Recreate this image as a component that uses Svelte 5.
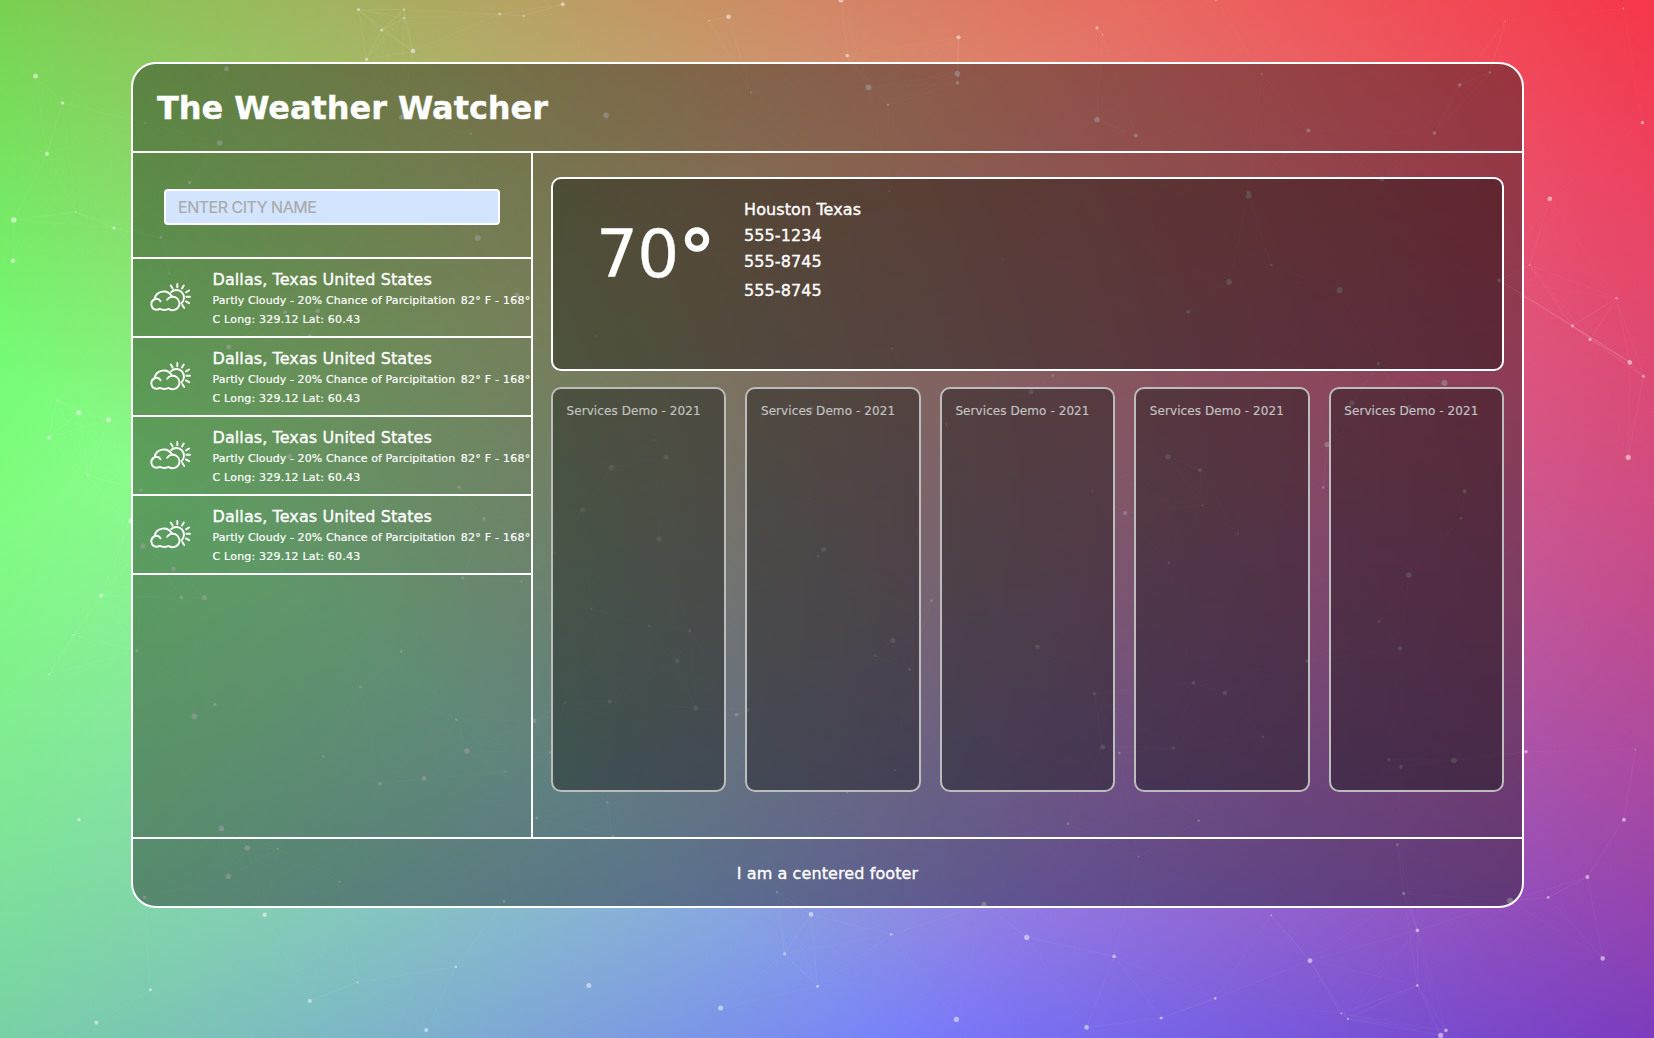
<script>
  const cities = [1, 2, 3, 4];
  const services = [1, 2, 3, 4, 5];

  // Particle field: x, y, radius
  const dots = `35.5,76,2.5 62.5,103,1.7 47,153.7,2 13.8,220,2.8 114,228,1.6 13,260.7,2.3 57,400,1 79,412.5,2.5 108.5,419.8,2.5 48.7,437.5,2 88,475.6,1 358.5,9.5,1.5 404,9.5,1 404,18,1 381.7,30,1.5 499.8,14,1.3 523.7,16,1 562.8,4.3,2 728.5,16.7,2.3 413,51,2.3 366.5,59.4,1.5 226.6,68.8,2.5 145.5,123,1 219.8,143,2.8 401.4,117.3,2.5 471,134,1 606,115.4,2.8 751,92.6,1 189.6,182.4,1.6 161,237.6,1.3 477.6,238,3 169.5,273.6,.8 517,295,2.5 318,311,2.3 285,312,2 271,319,2 310,335.5,1.5 228.8,347,2.5 289.7,456.6,2.5 459,487,1.8 141,490,1.5 484,518.8,1.8 75.7,212,.7 654,440,.8 666,457,2.5 611.5,467.4,2.8 582.5,510,2.3 811,409,2.8 595.5,336,.8 709,20.6,.7
  841,0,2.5 847.3,55.6,1.8 958.5,37.3,2 1097,28,1.4 1102.5,34.7,.7 1216,0,.9 1505.3,21,.6 1623.4,8.4,.8 868.5,87.4,3 957.4,73.8,2.8 957.4,83,1.8 888,105,1.3 1097,119.7,2.8 1135.8,135.4,2 1308.4,130.6,2 1261.8,73.8,.9 1459.8,85,1.8 1490,72.4,1.2 1434.4,133,1.8 1642.4,122.7,1.6 1549.8,198.7,2.3 1382,179,2.5 1248.6,195.7,2.8 1248.6,192.3,1.8 1229,282,2.8 1271.3,265,1.2 1339.6,290.3,3 1188.2,311.7,2 1499,280.4,2 1378.3,363.7,1.6 1529.7,265,.7 1616.5,298,1.1 1572.6,326,1.4 1590,339.4,1.6 1629.8,362.4,2.3 1643.5,376.4,1.4 1628.2,457.4,2.6 1444.5,383,3 1351.8,403,2.6 1409,406.8,2 1327,444.6,2.6 1323.2,487.4,1.2 1168,456.6,2.6 1200,470,2 1464.6,491.4,2 1461,518.4,1.2 1125.2,513,2 1092.4,490.4,.7 1202.5,505.4,.7 1031,391.7,2.5 1052.7,375.6,1.3 946.3,424,1.2 889.6,191,1 891.8,348.4,1.1 1003,259.4,.6
  130.7,520.7,2.5 143,546,2.6 173.7,568.7,2 101,595.7,2 181.6,597.4,2 204.4,597.7,2.5 73.6,635,1 49.2,674.4,.8 137,650.7,1.6 401.3,651.4,1.5 462.7,578,1.5 521.5,581.7,1 360.6,687,1.3 215,704.7,1.6 194.3,716.4,2.8 456.4,719.4,1.2 533.7,720.7,2.5 467,751,2.8 323.5,756.4,1.2 424,778.4,2.3 380,783.7,1.9 505.6,771.7,1 221.3,828.4,2.8 79,819.7,1.7 247.3,848,2.8 278,848.7,1 228.2,876.4,2.6 339.4,881.4,1 144.6,897.4,1.6 264.7,914.7,2.2 150.4,989.7,1.5 96.4,1022.4,2 309.8,1001,2 357.4,982.4,.9 455.9,966.7,1.3 426.2,1030,2 504,901.4,1.3 588.8,985.4,2.5 720.6,1008,2.5 811,914.4,2.3 784.6,953.7,1.5 817.5,986.4,1.3 659,539,2.6 554.9,553.4,1.2 591.4,609,1 649.6,625.7,1.3 689.9,630.7,1.6 677.1,660.7,2.3 609.9,701.4,2 564.9,702.4,1 695.7,708,2.6 736.5,714.7,1.9 748,710,2 550.6,752.7,1.4 607.3,802.4,1.2 536.9,818,1.6 613,836,1.3 823.8,549.4,2.5 818,556.4,1.3 777.2,892,1.3
  931.5,600.7,1.3 892.8,640.4,2.5 875.4,655.7,1.3 909.8,669.4,1.6 1037.4,646.7,2.2 1094.5,693.7,1.8 1102.5,747,2.5 895,770,1 847,792.4,1 983.9,904.4,2.6 891.2,934.4,1.2 1026.8,937.4,2.6 1114.1,956.4,1.9 956.4,1019.4,2.6 1086.6,1027.4,2.3 1161.2,1018,1.6 1215.2,998.4,1.3 1310,960.7,2.4 1417.4,930.4,1.8 1417.4,985.4,1.3 1341.2,1013.4,.8 1348,1019,1.1 1446,1030.4,1.8 1440.7,1035.4,2.6 1602.7,958.4,2.3 1587.4,877,2 1548.2,897.4,1.3 1623.9,819.7,2 1510,900.7,3 1403.7,893.4,1.6 1397.3,844.7,1.3 1068,823.7,1.3 1198.8,820.7,1.2 1138.5,856.7,.8 1271.3,915.4,.8 1526,751.7,1.7 1635.5,749.7,.6 1454,760.4,2.6 1401,766.7,1.8 1388.9,759.4,1.5 1173.4,748,1.5 1262.9,737,1.2 1224.8,692.7,2.2 1193.5,683,1.9 1169,562.7,1.2 1238,534,1 1409,575,2.8 1379.3,621.4,1.2 1400,648.4,2.2 1307.4,661,2 1119.4,753,1.3`
    .trim().split(/\s+/).map((d) => d.split(',').map(Number));

  // Nearby particles are joined; the line fades with distance
  const reach = 150;
  const links = [];
  for (let i = 0; i < dots.length; i++) {
    for (let j = i + 1; j < dots.length; j++) {
      const d = Math.hypot(dots[i][0] - dots[j][0], dots[i][1] - dots[j][1]);
      if (d < reach) links.push([dots[i], dots[j], 0.09 * (1 - d / reach)]);
    }
  }
</script>

<div class="page">
  <svg class="particles" viewBox="0 0 1654 1038" aria-hidden="true">
    {#each links as [a, b, o]}
      <line x1={a[0]} y1={a[1]} x2={b[0]} y2={b[1]} stroke="#fff" stroke-opacity={o} />
    {/each}
    <line x1="1499" y1="280" x2="1630" y2="362" stroke="#fff" stroke-opacity=".14" />
    {#each dots as [x, y, r]}
      <circle cx={x} cy={y} {r} fill="#fff" fill-opacity=".5" />
    {/each}
  </svg>

  <div class="panel">
    <header><h1>The Weather Watcher</h1></header>
    <div class="body">
      <aside>
        <div class="search"><input type="text" placeholder="ENTER CITY NAME" /></div>
        {#each cities as city (city)}
          <div class="city">
            <svg class="icon" viewBox="0 0 42 29" aria-hidden="true">
              <path d="M11.500 18.200C10.200 15.900 7.600 15.400 5.300 16.300A5.600 5.600 0 0 0 7.400 26.800Q9.400 26.800 10.800 25.900Q15.200 28 19.800 25.900A6.700 6.700 0 1 0 18.200 16.800M5.500 16.100A9.300 9.300 0 0 1 22.900 13.500" />
              <path d="M22.200 9A7.400 7.400 0 1 1 32.500 20.200M28.300 1v3.200M21.800 2.500l1.800 3M34.800 2.500l-1.800 3M40.100 7.500l-3 1.800M41 13.700h-3.600M40.100 20.200l-3.200-1.800M35.200 25l-1.900-3" />
            </svg>
            <div class="info">
              <div class="name">Dallas, Texas United States</div>
              <div class="detail"><span>Partly Cloudy - 20% Chance of Parcipitation</span><span class="temp">82° F - 168°</span></div>
              <div class="detail position">C Long: 329.12 Lat: 60.43</div>
            </div>
          </div>
        {/each}
      </aside>
      <main>
        <section class="current">
          <div class="degrees">70<span class="ring">°</span></div>
          <div class="facts">
            <div>Houston Texas</div>
            <div>555-1234</div>
            <div>555-8745</div>
            <div class="last">555-8745</div>
          </div>
        </section>
        <div class="services">
          {#each services as s (s)}
            <div class="service">Services Demo - 2021</div>
          {/each}
        </div>
      </main>
    </div>
    <footer>I am a centered footer</footer>
  </div>
</div>

<style>
  :global(body) { margin: 0; overflow: hidden; }
  .page {
    box-sizing: border-box;
    position: relative;
    height: 1038px;
    padding: 62px 130px 130px 131px;
    color: #fff;
    font: 16px/20px Verdana, "DejaVu Sans", sans-serif;
    -webkit-text-stroke: .35px currentColor;
    background:
      linear-gradient(rgba(215, 205, 225, .06), rgba(215, 205, 225, .06)),
      linear-gradient(217deg, rgba(255, 0, 18, .8), rgba(255, 0, 18, 0) 70.71%),
      linear-gradient(127deg, rgba(18, 255, 18, .72), rgba(18, 255, 18, 0) 70.71%),
      linear-gradient(336deg, rgba(0, 10, 255, .75), rgba(0, 10, 255, 0) 70.71%),
      #fff;
  }
  .page * { box-sizing: border-box; }
  .particles { position: absolute; inset: 0; width: 1654px; height: 1038px; }
  .panel {
    position: relative;
    display: flex;
    flex-direction: column;
    height: 846px;
    border: 2px solid #fff;
    border-radius: 25px;
    overflow: hidden;
    background: rgba(22, 22, 22, .4);
  }
  header { flex: none; height: 89px; padding: 24px; border-bottom: 2px solid #fff; }
  h1 { margin: 0; font-size: 32px; line-height: 41px; font-weight: 700; letter-spacing: -.05px; }
  .body { flex: 1; display: flex; min-height: 0; }
  aside { flex: none; width: 400px; border-right: 2px solid #fff; }
  .search { height: 106px; padding: 36px 31px 0; border-bottom: 2px solid #fff; }
  input {
    display: block;
    width: 336px;
    height: 36px;
    padding: 0 12px;
    border: 2px solid #fff;
    border-radius: 4px;
    background: #d2e4ff;
    font: 16px Inter, sans-serif;
    letter-spacing: -.48px;
    -webkit-text-stroke: .15px currentColor;
  }
  input::placeholder { color: #a9a9a9; opacity: 1; }
  .city { display: flex; height: 79px; border-bottom: 2px solid #fff; overflow: hidden; white-space: nowrap; }
  .icon {
    flex: none;
    width: 42px;
    height: 29px;
    margin: 24px 21.5px 0 16px;
    fill: none;
    stroke: #fff;
    stroke-width: 1.9;
    stroke-linecap: round;
    stroke-linejoin: round;
  }
  .info { padding-top: 10.5px; }
  .name { letter-spacing: .09px; }
  .detail { font-size: 11px; line-height: 19px; letter-spacing: .09px; -webkit-text-stroke: .18px currentColor; }
  .detail:not(.position) { padding-top: 1px; }
  .position { letter-spacing: .2px; }
  .temp { margin-left: 5.5px; letter-spacing: .25px; }
  main { flex: 1; padding: 24px 18px 0; }
  .current {
    display: flex;
    height: 194px;
    padding-left: 43px;
    border: 2px solid #fff;
    border-radius: 10px;
    background: rgba(8, 8, 8, .37);
  }
  .degrees { width: 148px; padding-top: 36px; font-size: 66px; line-height: 80px; letter-spacing: -.7px; -webkit-text-stroke: .3px #fff; }
  .ring { font-size: 74px; line-height: 0; vertical-align: -6px; -webkit-text-stroke: 1.4px #fff; }
  .facts { padding-top: 18px; line-height: 26px; letter-spacing: .1px; }
  .last { margin-top: 3px; }
  .services { display: grid; grid-template-columns: repeat(5, 1fr); gap: 19.2px; margin-top: 16px; }
  .service {
    height: 405px;
    padding: 12px 13.5px;
    border: 2px solid #bcbcbc;
    border-radius: 10px;
    background: rgba(14, 14, 14, .4);
    color: #c4c4c4;
    font-size: 12px;
    letter-spacing: .08px;
    white-space: nowrap;
    -webkit-text-stroke: .15px currentColor;
  }
  footer { flex: none; height: 69px; padding-top: 25px; border-top: 2px solid #fff; text-align: center; letter-spacing: .1px; }
</style>
